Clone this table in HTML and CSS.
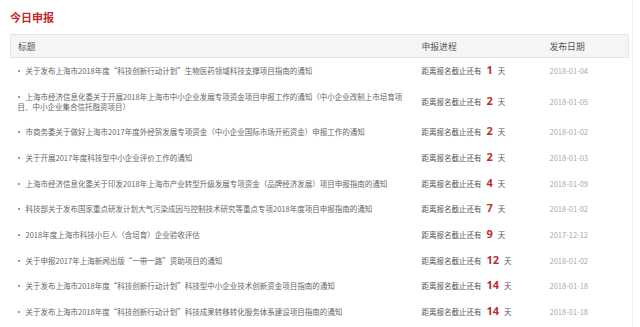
FILE: index.html
```html
<!DOCTYPE html>
<html lang="zh-CN">
<head>
<meta charset="utf-8">
<title>今日申报</title>
<link rel="stylesheet" href="styles.css">
</head>
<body>
<div class="page">
  <h2 class="title">今日申报</h2>
  <table class="list">
    <colgroup>
      <col class="c-title">
      <col class="c-prog">
      <col class="c-date">
    </colgroup>
    <thead>
      <tr><th>标题</th><th>申报进程</th><th>发布日期</th></tr>
    </thead>
    <tbody>
      <tr><td class="t"><span class="dot"></span>关于发布上海市2018年度“科技创新行动计划”生物医药领域科技支撑项目指南的通知</td><td class="p">距离报名截止还有<b>1</b>天</td><td class="d">2018-01-04</td></tr>
      <tr><td class="t"><span class="dot"></span>上海市经济信息化委关于开展2018年上海市中小企业发展专项资金项目申报工作的通知（中小企业改制上市培育项目、中小企业集合信托融资项目）</td><td class="p">距离报名截止还有<b>2</b>天</td><td class="d">2018-01-05</td></tr>
      <tr><td class="t"><span class="dot"></span>市商务委关于做好上海市2017年度外经贸发展专项资金（中小企业国际市场开拓资金）申报工作的通知</td><td class="p">距离报名截止还有<b>2</b>天</td><td class="d">2018-01-02</td></tr>
      <tr><td class="t"><span class="dot"></span>关于开展2017年度科技型中小企业评价工作的通知</td><td class="p">距离报名截止还有<b>2</b>天</td><td class="d">2018-01-03</td></tr>
      <tr><td class="t"><span class="dot"></span>上海市经济信息化委关于印发2018年上海市产业转型升级发展专项资金（品牌经济发展）项目申报指南的通知</td><td class="p">距离报名截止还有<b>4</b>天</td><td class="d">2018-01-09</td></tr>
      <tr><td class="t"><span class="dot"></span>科技部关于发布国家重点研发计划大气污染成因与控制技术研究等重点专项2018年度项目申报指南的通知</td><td class="p">距离报名截止还有<b>7</b>天</td><td class="d">2018-01-02</td></tr>
      <tr><td class="t"><span class="dot"></span>2018年度上海市科技小巨人（含培育）企业验收评估</td><td class="p">距离报名截止还有<b>9</b>天</td><td class="d">2017-12-12</td></tr>
      <tr><td class="t"><span class="dot"></span>关于申报2017年上海新闻出版“一带一路”资助项目的通知</td><td class="p">距离报名截止还有<b>12</b>天</td><td class="d">2018-01-02</td></tr>
      <tr><td class="t"><span class="dot"></span>关于发布上海市2018年度“科技创新行动计划”科技型中小企业技术创新资金项目指南的通知</td><td class="p">距离报名截止还有<b>14</b>天</td><td class="d">2018-01-18</td></tr>
      <tr><td class="t"><span class="dot"></span>关于发布上海市2018年度“科技创新行动计划”科技成果转移转化服务体系建设项目指南的通知</td><td class="p">距离报名截止还有<b>14</b>天</td><td class="d">2018-01-18</td></tr>
    </tbody>
  </table>
</div>
</body>
</html>
```

FILE: styles.css
```css
html, body {
  margin: 0;
  padding: 0;
  background: #ffffff;
}
body {
  font-family: "Noto Sans CJK SC", "Noto Sans", "Liberation Sans", sans-serif;
  color: #666;
}
.page {
  width: 633px;
  height: 327px;
  box-sizing: border-box;
  padding: 10px 0 0 10px;
  border-right: 1px solid #f0f0f0;
  overflow: hidden;
}
.title {
  margin: 0;
  font-size: 11px;
  line-height: 14px;
  font-weight: bold;
  color: #c6262d;
}
.list {
  margin-top: 10px;
  width: 618px;
  border-collapse: collapse;
  table-layout: fixed;
}
.c-title { width: 404px; }
.c-prog { width: 128px; }
.c-date { width: 86px; }
.list thead tr {
  background: #f5f5f5;
  border: 1px solid #e6e6e6;
}
.list th {
  height: 22px;
  padding: 0 7px;
  font-size: 8.8px;
  font-weight: normal;
  color: #555;
  text-align: left;
  vertical-align: middle;
}
.list td {
  padding: 7.85px 5px 7.85px 7px;
  font-size: 7.5px;
  line-height: 10px;
  vertical-align: middle;
}
.t {
  color: #666;
}
.dot {
  display: inline-block;
  width: 8px;
  height: 10px;
  vertical-align: top;
  position: relative;
}
.dot::before {
  content: "";
  position: absolute;
  left: 0;
  top: 4px;
  width: 2px;
  height: 2px;
  background: #999;
}
.p {
  color: #555;
  font-size: 7.4px;
  white-space: nowrap;
}
.p b {
  margin: 0 5px;
  font-size: 11px;
  line-height: 0;
  font-weight: bold;
  color: #b8312f;
  font-family: "Open Sans", "Noto Sans", sans-serif;
}
.d {
  color: #aaa;
  font-size: 8px;
}
```
